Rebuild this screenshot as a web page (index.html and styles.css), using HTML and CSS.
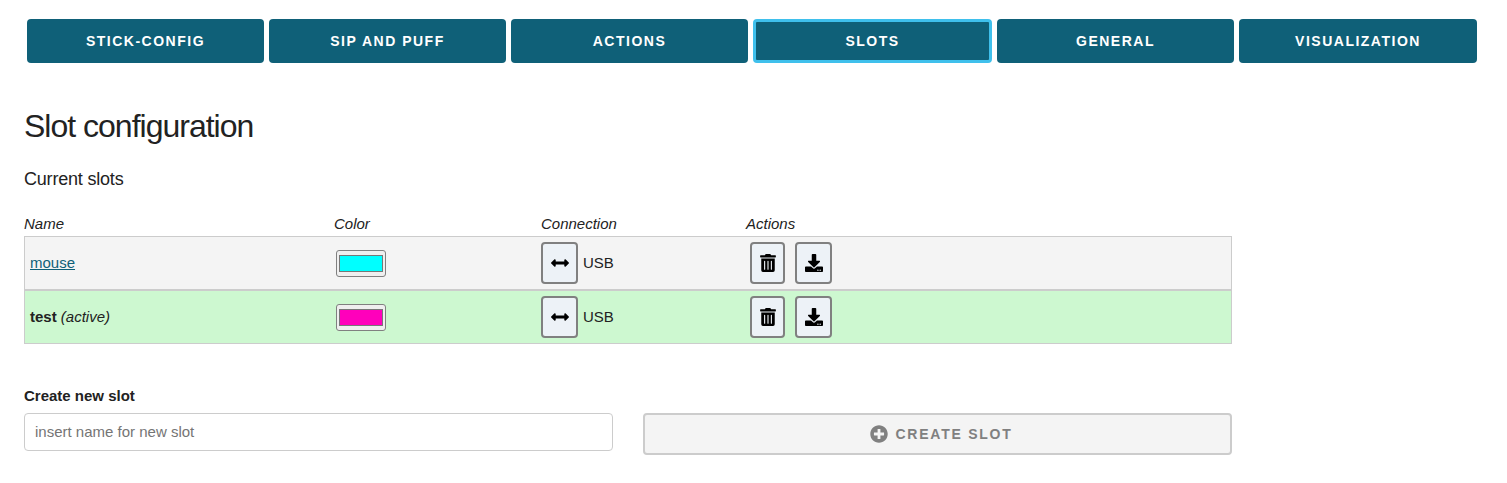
FILE: index.html
```html
<!DOCTYPE html>
<html lang="en">
<head>
<meta charset="utf-8">
<title>Slot configuration</title>
<link rel="stylesheet" href="styles.css">
</head>
<body>
<nav class="tabs">
  <button class="tab">Stick-Config</button>
  <button class="tab">Sip and Puff</button>
  <button class="tab">Actions</button>
  <button class="tab tab-active">Slots</button>
  <button class="tab">General</button>
  <button class="tab">Visualization</button>
</nav>
<main class="content">
  <h1 class="title">Slot configuration</h1>
  <h2 class="subtitle">Current slots</h2>
  <div class="head-row">
    <span>Name</span><span>Color</span><span>Connection</span><span>Actions</span>
  </div>
  <div class="slot-row">
    <div class="name"><a href="#" class="slot-link">mouse</a></div>
    <div class="color"><input class="swatch" type="color" value="#00ffff"></div>
    <div class="conn">
      <button class="icon-btn btn-conn"><svg class="ic-arrows" viewBox="0 0 512 512"><path d="M377.941 169.941V216H134.059v-46.059c0-21.382-25.851-32.09-40.971-16.971L7.029 239.029c-9.373 9.373-9.373 24.568 0 33.941l86.059 86.059c15.119 15.119 40.971 4.411 40.971-16.971V296h243.882v46.059c0 21.382 25.851 32.09 40.971 16.971l86.059-86.059c9.373-9.373 9.373-24.568 0-33.941l-86.059-86.059c-15.119-15.12-40.971-4.412-40.971 16.97z"/></svg></button>
      <span class="conn-label">USB</span>
    </div>
    <div class="acts">
      <button class="icon-btn btn-trash"><svg class="ic-trash" viewBox="0 0 448 512"><path d="M32 464a48 48 0 0 0 48 48h288a48 48 0 0 0 48-48V128H32zm272-256a16 16 0 0 1 32 0v224a16 16 0 0 1-32 0zm-96 0a16 16 0 0 1 32 0v224a16 16 0 0 1-32 0zm-96 0a16 16 0 0 1 32 0v224a16 16 0 0 1-32 0zM432 32H312l-9.4-18.7A24 24 0 0 0 281.1 0H166.8a23.72 23.72 0 0 0-21.4 13.3L136 32H16A16 16 0 0 0 0 48v32a16 16 0 0 0 16 16h416a16 16 0 0 0 16-16V48a16 16 0 0 0-16-16z"/></svg></button>
      <button class="icon-btn btn-down"><svg class="ic-down" viewBox="0 0 512 512"><path d="M216 0h80c13.3 0 24 10.7 24 24v168h87.7c17.8 0 26.7 21.5 14.1 34.1L269.7 378.3c-7.5 7.5-19.8 7.5-27.3 0L90.1 226.1c-12.6-12.6-3.7-34.1 14.1-34.1H192V24c0-13.3 10.7-24 24-24zm296 376v112c0 13.3-10.7 24-24 24H24c-13.3 0-24-10.7-24-24V376c0-13.3 10.7-24 24-24h146.7l49 49c20.1 20.1 52.5 20.1 72.6 0l49-49H488c13.3 0 24 10.7 24 24zm-124 88c0-11-9-20-20-20s-20 9-20 20 9 20 20 20 20-9 20-20zm64 0c0-11-9-20-20-20s-20 9-20 20 9 20 20 20 20-9 20-20z"/></svg></button>
    </div>
  </div>
  <div class="slot-row slot-active">
    <div class="name"><strong>test</strong> <em>(active)</em></div>
    <div class="color"><input class="swatch" type="color" value="#ff00bb"></div>
    <div class="conn">
      <button class="icon-btn btn-conn"><svg class="ic-arrows" viewBox="0 0 512 512"><path d="M377.941 169.941V216H134.059v-46.059c0-21.382-25.851-32.09-40.971-16.971L7.029 239.029c-9.373 9.373-9.373 24.568 0 33.941l86.059 86.059c15.119 15.119 40.971 4.411 40.971-16.971V296h243.882v46.059c0 21.382 25.851 32.09 40.971 16.971l86.059-86.059c9.373-9.373 9.373-24.568 0-33.941l-86.059-86.059c-15.119-15.12-40.971-4.412-40.971 16.97z"/></svg></button>
      <span class="conn-label">USB</span>
    </div>
    <div class="acts">
      <button class="icon-btn btn-trash"><svg class="ic-trash" viewBox="0 0 448 512"><path d="M32 464a48 48 0 0 0 48 48h288a48 48 0 0 0 48-48V128H32zm272-256a16 16 0 0 1 32 0v224a16 16 0 0 1-32 0zm-96 0a16 16 0 0 1 32 0v224a16 16 0 0 1-32 0zm-96 0a16 16 0 0 1 32 0v224a16 16 0 0 1-32 0zM432 32H312l-9.4-18.7A24 24 0 0 0 281.1 0H166.8a23.72 23.72 0 0 0-21.4 13.3L136 32H16A16 16 0 0 0 0 48v32a16 16 0 0 0 16 16h416a16 16 0 0 0 16-16V48a16 16 0 0 0-16-16z"/></svg></button>
      <button class="icon-btn btn-down"><svg class="ic-down" viewBox="0 0 512 512"><path d="M216 0h80c13.3 0 24 10.7 24 24v168h87.7c17.8 0 26.7 21.5 14.1 34.1L269.7 378.3c-7.5 7.5-19.8 7.5-27.3 0L90.1 226.1c-12.6-12.6-3.7-34.1 14.1-34.1H192V24c0-13.3 10.7-24 24-24zm296 376v112c0 13.3-10.7 24-24 24H24c-13.3 0-24-10.7-24-24V376c0-13.3 10.7-24 24-24h146.7l49 49c20.1 20.1 52.5 20.1 72.6 0l49-49H488c13.3 0 24 10.7 24 24zm-124 88c0-11-9-20-20-20s-20 9-20 20 9 20 20 20 20-9 20-20zm64 0c0-11-9-20-20-20s-20 9-20 20 9 20 20 20 20-9 20-20z"/></svg></button>
    </div>
  </div>
  <label class="form-label" for="slot-name">Create new slot</label>
  <div class="form-row">
    <input id="slot-name" class="name-input" type="text" placeholder="insert name for new slot">
    <button class="create-btn"><svg class="ic-plus" viewBox="0 0 512 512"><path d="M256 8C119 8 8 119 8 256s111 248 248 248 248-111 248-248S393 8 256 8zm144 276c0 6.6-5.4 12-12 12h-92v92c0 6.6-5.4 12-12 12h-56c-6.6 0-12-5.4-12-12v-92h-92c-6.6 0-12-5.4-12-12v-56c0-6.6 5.4-12 12-12h92v-92c0-6.6 5.4-12 12-12h56c6.6 0 12 5.4 12 12v92h92c6.6 0 12 5.4 12 12v56z"/></svg><span>Create Slot</span></button>
  </div>
</main>
</body>
</html>
```
FILE: styles.css
```css
* { box-sizing: border-box; }
html, body { margin: 0; background: #fff; }
body {
  font-family: "Liberation Sans", Arial, sans-serif;
  font-size: 15px;
  color: #222;
}
.tabs {
  display: grid;
  grid-template-columns: 237px 237px 237px 239px 237px 238px;
  gap: 5px;
  margin: 19px 0 0 27px;
  width: 1450px;
}
.tab {
  height: 44px;
  background: #0f6078;
  color: #fff;
  border: 0;
  border-radius: 4px;
  font: bold 14px "Liberation Sans", Arial, sans-serif;
  letter-spacing: 1.5px;
  text-transform: uppercase;
  padding: 0;
}
.tab-active { border: 3px solid #3fc0ec; }
.content { padding-left: 24px; width: 1232px; }
.title {
  margin: 43px 0 0;
  font-size: 32px;
  font-weight: 400;
  line-height: 40px;
  letter-spacing: -1px;
  color: #222;
}
.subtitle {
  margin: 21px 0 0;
  font-size: 18px;
  font-weight: 400;
  line-height: 24px;
  letter-spacing: -0.2px;
  color: #222;
}
.head-row {
  display: grid;
  grid-template-columns: 310px 207px 205px 1fr;
  margin-top: 24px;
  height: 21px;
  line-height: 18px;
  font-style: italic;
}
.slot-row {
  display: grid;
  grid-template-columns: 309px 207px 205px 1fr;
  align-items: center;
  height: 54px;
  background: #f4f4f4;
  border: 1px solid #ccc;
}
.slot-active { background: #cdf8d0; border-top: 1px solid #ccc; }
.name { padding: 0 0 2px 5px; }
.slot-link { color: #0f6078; }
.color { display: flex; padding-left: 2px; }
.swatch {
  display: block;
  width: 50px;
  height: 27px;
  margin: 0;
  padding: 0;
  background: #efefef;
  border: 1px solid #808080;
  border-radius: 3px;
}
.conn { display: flex; align-items: center; gap: 5px; }
.conn-label { padding-bottom: 2px; }
.acts { display: flex; gap: 10px; padding-left: 4px; }
.icon-btn {
  display: flex;
  align-items: center;
  justify-content: center;
  height: 42px;
  padding: 0;
  background: #edf2f7;
  border: 2px solid #808080;
  border-radius: 4px;
}
.btn-conn { width: 37px; }
.btn-trash { width: 35px; }
.btn-down { width: 37px; }
.ic-arrows { width: 18px; height: 18px; display: block; }
.ic-trash { width: 16px; height: 18px; display: block; }
.ic-down { width: 18px; height: 18px; display: block; }
.form-label {
  display: block;
  margin-top: 43px;
  font-weight: 700;
  line-height: 18px;
}
.form-row {
  display: grid;
  grid-template-columns: 589px 589px;
  gap: 30px;
  margin-top: 8px;
  align-items: start;
}
.name-input {
  height: 38px;
  padding: 0 10px 2px;
  border: 1px solid #ccc;
  border-radius: 4px;
  font: 15px "Liberation Sans", Arial, sans-serif;
  color: #222;
}
.name-input::placeholder { color: #757575; opacity: 1; }
.create-btn {
  display: flex;
  align-items: center;
  justify-content: center;
  gap: 8px;
  height: 42px;
  padding: 0 0 0 7px;
  background: #f4f4f4;
  border: 2px solid #ccc;
  border-radius: 4px;
  color: #808080;
  font: bold 14px "Liberation Sans", Arial, sans-serif;
  letter-spacing: 1.75px;
  text-transform: uppercase;
}
.ic-plus { width: 18px; height: 18px; fill: #808080; display: block; }
```
